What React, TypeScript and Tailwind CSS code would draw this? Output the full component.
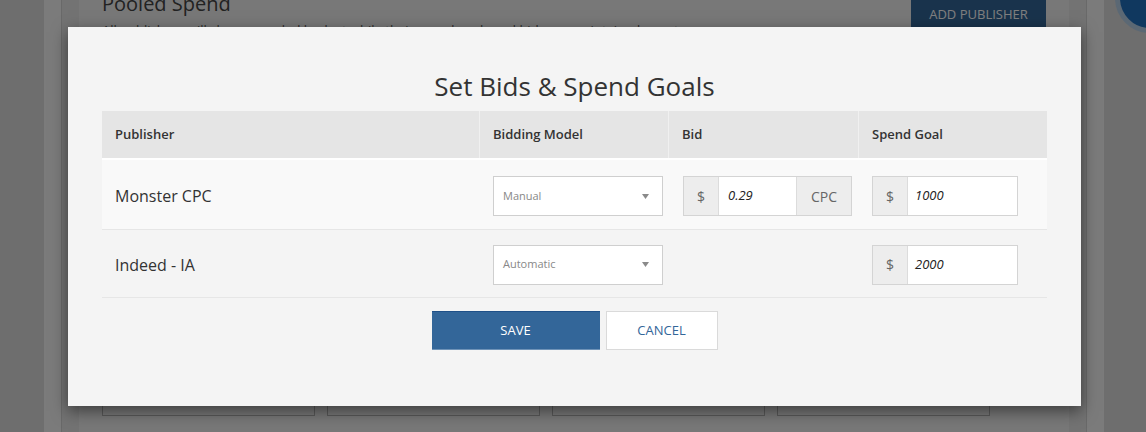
import React from 'react';

interface PublisherRow {
  name: string;
  model: string;
  bid?: string;
  goal: string;
}

const rows: PublisherRow[] = [
  { name: 'Monster CPC', model: 'Manual', bid: '0.29', goal: '1000' },
  { name: 'Indeed - IA', model: 'Automatic', goal: '2000' },
];

const Caret: React.FC = () => (
  <svg width="7" height="5" viewBox="0 0 7 5" className="shrink-0">
    <path d="M0 0h7L3.5 5z" fill="#8a8a8a" />
  </svg>
);

const SelectBox: React.FC<{ value: string }> = ({ value }) => (
  <div className="flex h-[40px] w-[170px] items-center justify-between border border-[#cfcfcf] bg-white pl-[9px] pr-[13px] text-[11px] text-[#888]">
    <span>{value}</span>
    <Caret />
  </div>
);

const Addon: React.FC<{ children: React.ReactNode; w: string }> = ({ children, w }) => (
  <div className={`flex h-full items-center justify-center bg-[#ededed] text-[14px] text-[#666] ${w}`}>
    {children}
  </div>
);

const App: React.FC = () => {
  return (
    <div
      className="relative flex h-[432px] w-[1146px] overflow-hidden bg-[#dcdcdc]"
      style={{ fontFamily: '"Open Sans", "Liberation Sans", sans-serif' }}
    >
      {/* page underneath the dialog */}
      <div className="w-[44px] bg-[#dcdcdc]"></div>
      <div className="w-[17px] bg-[#f6f6f6]"></div>
      <div className="w-[1px] bg-[#d2d2d2]"></div>
      <div className="w-[17px] bg-[#e6e6e6]"></div>
      <main className="flex w-[990px] flex-col bg-[#f0f0f0] px-[23px]">
        <div className="flex items-start justify-between">
          <div>
            <h2 className="-mt-[10px] text-[20px] leading-[28px] text-[#444]">Pooled Spend</h2>
            <p className="mt-[2px] text-[13px] leading-[20px] text-[#555]">
              All publishers will share a pooled budget while their spend goals and bids are maintained as set.
            </p>
          </div>
          <button className="-mt-[3px] h-[36px] w-[135px] bg-[#336699] text-[13px] text-white">ADD PUBLISHER</button>
        </div>
        <div className="mb-[16px] mt-auto flex gap-[12px]">
          <div className="h-[40px] w-[213px] border border-[#b4b4b4]"></div>
          <div className="h-[40px] w-[213px] border border-[#b4b4b4]"></div>
          <div className="h-[40px] w-[213px] border border-[#b4b4b4]"></div>
          <div className="h-[40px] w-[213px] border border-[#b4b4b4]"></div>
        </div>
      </main>
      <div className="w-[17px] bg-[#e6e6e6]"></div>
      <div className="w-[1px] bg-[#d2d2d2]"></div>
      <div className="w-[17px] bg-[#f6f6f6]"></div>
      <div className="flex-1 bg-[#dcdcdc]"></div>
      <div className="absolute left-[1115px] top-[-37px] h-[70px] w-[70px] rounded-full border-[5px] border-[#b6d0e8] bg-[#2170be]"></div>

      {/* backdrop */}
      <div className="absolute inset-0 bg-black/50"></div>

      {/* dialog */}
      <div className="absolute left-[68px] top-[27px] h-[379px] w-[1013px] bg-[#f4f4f4] px-[34px] pt-[40px] shadow-[0_5px_15px_rgba(0,0,0,0.5)]">
        <h1 className="mb-[6px] text-center text-[26px] leading-[38px] text-[#333]">Set Bids &amp; Spend Goals</h1>

        <div className="grid h-[47px] grid-cols-[377px_189px_190px_189px] bg-[#e5e5e5] text-[13px] font-semibold text-[#333]">
          <div className="flex items-center pl-[13px]">Publisher</div>
          <div className="flex items-center border-l border-[#f0f0f0] pl-[13px]">Bidding Model</div>
          <div className="flex items-center border-l border-[#f0f0f0] pl-[13px]">Bid</div>
          <div className="flex items-center border-l border-[#f0f0f0] pl-[13px]">Spend Goal</div>
        </div>

        {rows.map((row, i) => (
          <div
            key={row.name}
            className={`grid grid-cols-[377px_189px_190px_189px] items-center border-b border-[#e6e6e6] ${
              i === 0 ? 'h-[72px] border-t-2 border-t-white bg-[#f9f9f9] pt-[3px]' : 'h-[68px] pt-[2px]'
            }`}
          >
            <div className="pl-[13px] text-[16px] text-[#333]">{row.name}</div>
            <div className="pl-[14px]">
              <SelectBox value={row.model} />
            </div>
            <div className="pl-[15px]">
              {row.bid && (
                <div className="flex h-[40px] w-[169px] border border-[#d4d4d4] bg-white">
                  <Addon w="w-[35px] border-r border-[#dcdcdc]">$</Addon>
                  <div className="flex flex-1 items-center pl-[9px] text-[13px] italic text-[#222]">{row.bid}</div>
                  <Addon w="w-[55px] border-l border-[#dcdcdc]">CPC</Addon>
                </div>
              )}
            </div>
            <div className="pl-[14px]">
              <div className="flex h-[40px] w-[146px] border border-[#d4d4d4] bg-white">
                <Addon w="w-[35px] border-r border-[#dcdcdc]">$</Addon>
                <div className="flex flex-1 items-center pl-[7px] text-[13px] italic text-[#222]">{row.goal}</div>
              </div>
            </div>
          </div>
        ))}

        <div className="mt-[13px] flex justify-center gap-[6px]">
          <button className="h-[39px] w-[168px] border-t border-b border-t-[#1f5088] border-b-[#6f93b8] bg-[#336699] text-[13px] text-white">SAVE</button>
          <button className="h-[39px] w-[112px] border border-[#dadada] bg-white text-[13px] text-[#336699]">CANCEL</button>
        </div>
      </div>
    </div>
  );
};

export default App;
